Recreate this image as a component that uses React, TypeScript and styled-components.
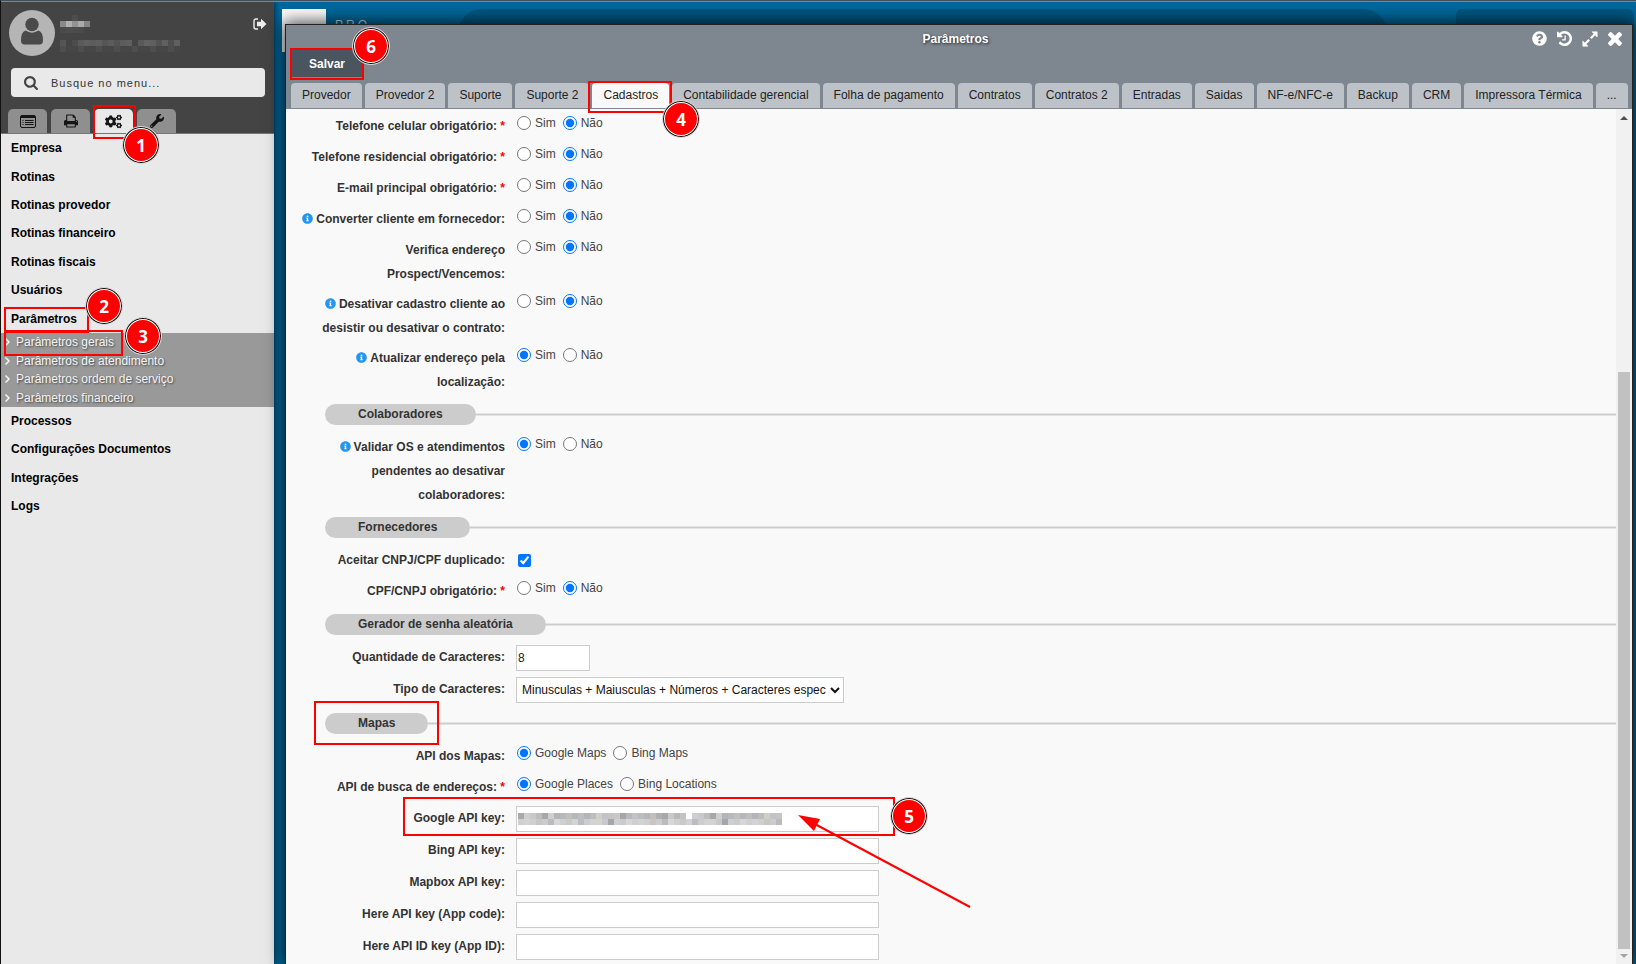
import React from 'react';
import styled, { createGlobalStyle } from 'styled-components';
import { FaCogs, FaInfoCircle, FaQuestionCircle, FaWrench } from 'react-icons/fa';

const GlobalStyle = createGlobalStyle`
  * { box-sizing: border-box; }
  body {
    margin: 0;
    overflow: hidden;
    font: 12px/24px "Liberation Sans", Arial, sans-serif;
    color: #333;
  }
  button, input, select { font: inherit; color: inherit; }
`;

const Page = styled.div`
  position: relative;
  display: flex;
  height: 100vh;
  overflow: hidden;
  background: #00689c;
  border-top: 1px solid #43505a;
  border-left: 1px solid #111;
`;

const TopLine = styled.div`
  position: absolute;
  inset: 0 0 auto 0;
  height: 1px;
  background: #7b858c;
  z-index: 3;
`;

/* ---------- Sidebar ---------- */

const Sidebar = styled.aside`
  display: flex;
  flex-direction: column;
  width: 273px;
  flex: none;
  background: #e9e9e9;
  box-shadow: 0 0 6px #001a2a;
  z-index: 1;
`;

const SideHeader = styled.div`
  display: flex;
  flex-direction: column;
  padding: 9px 7px 0;
  background: #444;
  border-bottom: 1px solid #777;
`;

const UserRow = styled.div`
  display: flex;
  align-items: flex-start;
  padding-left: 1px;
`;

const UserInfo = styled.div`
  flex: 1;
  display: flex;
  padding: 5px 0 0 5px;
`;

const LogoutButton = styled.button`
  display: flex;
  margin: 8px 0 0;
  padding: 0;
  border: 0;
  background: none;
  color: #eee;
`;

const SearchBox = styled.label`
  display: flex;
  align-items: center;
  gap: 13px;
  height: 29px;
  margin: 12px 2px 12px 3px;
  padding-left: 13px;
  border-radius: 4px;
  background: #e9e9e9;
  color: #444;
`;

const SearchInput = styled.input`
  flex: 1;
  min-width: 0;
  padding: 0;
  border: 0;
  outline: 0;
  background: none;
  font-size: 11px;
  letter-spacing: 1px;
  &::placeholder { color: #333; opacity: 1; }
`;

const SideTabs = styled.div`
  display: flex;
  gap: 4px;
`;

const SideTab = styled.button<{ $active?: boolean }>`
  display: flex;
  align-items: center;
  justify-content: center;
  width: 39px;
  height: 24px;
  padding: 0;
  border: 0;
  border-radius: 5px 5px 0 0;
  margin-bottom: ${(p) => (p.$active ? '-1px' : '0')};
  background: ${(p) => (p.$active ? '#e9e9e9' : '#8f8f8f')};
  color: #151515;
`;

const MenuGroup = styled.nav<{ $height: number }>`
  display: grid;
  grid-auto-rows: 1fr;
  align-items: center;
  height: ${(p) => p.$height}px;
  padding-left: 10px;
`;

const MenuLink = styled.a`
  color: #000;
  font-weight: bold;
  text-decoration: none;
`;

const SubMenu = styled.nav`
  display: grid;
  grid-auto-rows: 1fr;
  align-items: center;
  height: 74px;
  background: #999;
`;

const SubLink = styled.a`
  display: flex;
  align-items: center;
  gap: 5px;
  padding-left: 3px;
  line-height: 18px;
  color: #f4f4f4;
  text-decoration: none;
  text-shadow: 1px 1px 2px #444;
`;

/* ---------- Page behind the window ---------- */

const Backdrop = styled.div`
  display: flex;
  flex: 1;
  align-items: flex-start;
  padding: 8px 2px 0 8px;
`;

const Logo = styled.div`
  width: 44px;
  height: 43px;
  background: #fff;
`;

const LogoText = styled.div`
  width: 132px;
  padding: 4px 0 0 9px;
  letter-spacing: 3px;
  white-space: nowrap;
  color: #c3d8e4;
`;

const HeaderSearch = styled.div`
  flex: 1;
  height: 50px;
  margin-right: 69px;
  border-radius: 24px;
  background: #005782;
`;

const HeaderBox = styled.div`
  width: 178px;
  height: 44px;
  border-radius: 6px;
  background: #005782;
`;

/* ---------- Window ---------- */

const Window = styled.section`
  position: absolute;
  inset: 23px 3px 0 284px;
  display: flex;
  flex-direction: column;
  border: 1px solid #222;
  border-bottom: 0;
  background: #f9f9f9;
  box-shadow: 0 0 16px 2px rgba(0, 0, 0, 0.75);
  z-index: 2;
`;

const WindowHeader = styled.header`
  display: flex;
  flex-direction: column;
  padding: 0 4px 0 5px;
  background: #7e8790;
  border-bottom: 1px solid #7e8790;
`;

const TitleBar = styled.div`
  display: flex;
  align-items: center;
  height: 25px;
  padding: 2px 6px 0 0;
`;

const Title = styled.h1`
  flex: 1;
  margin: 0 0 0 88px;
  text-align: center;
  font-size: 12px;
  color: #fff;
  text-shadow: 1px 1px 3px #222;
`;

const WindowActions = styled.div`
  display: flex;
  align-items: center;
  gap: 10px;
`;

const IconButton = styled.button`
  display: flex;
  padding: 0;
  border: 0;
  background: none;
  color: #fff;
`;

const SaveButton = styled.button`
  align-self: flex-start;
  width: 72px;
  height: 27px;
  margin-bottom: 6px;
  padding: 0;
  border: 0;
  background: #4a5560;
  color: #fff;
  font-weight: bold;
`;

const Tabs = styled.div`
  display: flex;
  gap: 3px;
`;

const Tab = styled.button<{ $active?: boolean }>`
  height: 25px;
  padding: 0 11px;
  border: 0;
  border-radius: 4px 4px 0 0;
  line-height: 23px;
  white-space: nowrap;
  margin-bottom: ${(p) => (p.$active ? '-1px' : '0')};
  background: ${(p) => (p.$active ? '#f9f9f9' : '#bdc2c9')};
  color: #222;
`;

const WindowBody = styled.div`
  display: flex;
  flex: 1;
  min-height: 0;
`;

const Form = styled.form`
  flex: 1;
  padding-top: 2px;
  overflow: hidden;
`;

const Row = styled.div`
  display: grid;
  grid-template-columns: 206px 1fr;
  column-gap: 11px;
  align-items: start;
  min-height: 31px;
  padding-left: 13px;
`;

const RowLabel = styled.label`
  padding: 3px 0;
  text-align: right;
  font-weight: bold;
`;

const InfoIcon = styled(FaInfoCircle)`
  margin-right: 3px;
  vertical-align: -1px;
  color: #2196f3;
`;

const Required = styled.span`
  color: #f00;
`;

const Options = styled.div`
  display: flex;
  gap: 7px;
  padding-left: 1px;
`;

const Option = styled.label`
  display: flex;
  align-items: center;
  gap: 4px;
  color: #444;
`;

const Radio = styled.input`
  width: 14px;
  height: 14px;
  margin: 0;
`;

const Check = styled.input`
  width: 13px;
  height: 13px;
  margin: 9px 2px;
`;

const FieldBox = styled.div`
  position: relative;
  padding: 3px 0;
`;

const TextField = styled.input<{ $width: number }>`
  display: block;
  width: ${(p) => p.$width}px;
  height: 26px;
  padding: 0 1px;
  border: 1px solid #ccc;
  background: #fff;
  color: #222;
`;

const Select = styled.select`
  display: block;
  width: 328px;
  height: 26px;
  padding: 0 1px;
  border: 1px solid #ccc;
  border-radius: 0;
  background: #fff;
  color: #111;
`;

const SectionHead = styled.div`
  display: flex;
  align-items: center;
  padding: 7px 0 7px 39px;
`;

const SectionTitle = styled.h2`
  margin: 0;
  padding: 0 33px;
  border-radius: 11px;
  background: #ccc;
  font-size: 12px;
  line-height: 21px;
`;

const SectionLine = styled.div`
  flex: 1;
  height: 3px;
  border: solid #e4e4e4;
  border-width: 1px 0;
  background: #ccc;
`;

const ScrollTrack = styled.div`
  display: flex;
  flex-direction: column;
  align-items: center;
  width: 16px;
  padding: 7px 0 6px;
  background: #f1f1f1;
`;

const ScrollThumb = styled.div`
  width: 12px;
  height: 577px;
  margin: auto 0 5px;
  background: #c1c1c1;
`;

const ScrollArrow = styled.div<{ $down?: boolean }>`
  border: 4px solid transparent;
  ${(p) =>
    p.$down
      ? 'border-top-color: #a3a3a3; border-bottom-width: 0;'
      : 'border-bottom-color: #505050; border-top-width: 0;'}
`;

/* ---------- Annotations over the screen ---------- */

const Frame = styled.div<{ $x: number; $y: number; $w: number; $h: number }>`
  position: absolute;
  left: ${(p) => p.$x - 1}px;
  top: ${(p) => p.$y - 1}px;
  width: ${(p) => p.$w}px;
  height: ${(p) => p.$h}px;
  border: 2px solid #f00;
  pointer-events: none;
  z-index: 4;
`;

const Badge = styled.span<{ $x: number; $y: number }>`
  position: absolute;
  left: ${(p) => p.$x - 20}px;
  top: ${(p) => p.$y - 20}px;
  width: 38px;
  height: 38px;
  border: 1px solid #ddd;
  border-radius: 50%;
  background: #f00;
  box-shadow: inset 0 0 0 1px #000, inset 0 0 0 2px #fff;
  color: #fff;
  font: bold 17px/38px "Open Sans", "Noto Sans", sans-serif;
  text-align: center;
  z-index: 5;
`;

const Arrow = styled.svg`
  position: absolute;
  left: 796px;
  top: 812px;
  z-index: 5;
  pointer-events: none;
`;

const MosaicLayer = styled.svg`
  position: absolute;
  left: 2px;
  top: 10px;
`;

type IconProps = { size: number };

const AvatarIcon = () => (
  <svg width="46" height="46" viewBox="0 0 46 46">
    <circle cx="23" cy="23" r="23" fill="#b5b5b5" />
    <path d="M16.500 20.500Q12 22 12 30.500 12 34.500 15.500 34.500h15q3.500 0 3.500-4 0-8.500-4.500-10-6.500 4-13 0z" fill="#4a4a4a" />
    <circle cx="23" cy="15" r="7.500" fill="#b5b5b5" />
    <circle cx="23" cy="14.500" r="6.700" fill="#4a4a4a" />
  </svg>
);

const SearchIcon = ({ size }: IconProps) => (
  <svg width={size} height={size} viewBox="64 128 1664 1664" fill="currentColor">
    <path d="M1216 832q0-185-131.500-316.500T768 384 451.500 515.500 320 832t131.500 316.500T768 1280t316.500-131.500T1216 832zm512 832q0 52-38 90t-90 38q-54 0-90-38l-343-342q-179 124-399 124-143 0-273.500-55.500t-225-150-150-225T64 832t55.500-273.500 150-225 225-150T768 128t273.500 55.500 225 150 150 225T1472 832q0 220-124 399l343 343q37 37 37 90z" />
  </svg>
);

const PrintIcon = ({ size }: IconProps) => (
  <svg width={size} height={size} viewBox="0 64 1664 1664" fill="currentColor">
    <path d="M384 1536h896v-256H384v256zm0-640h896V512h-160q-40 0-68-28t-28-68V256H384v640zm1152 64q0-26-19-45t-45-19-45 19-19 45 19 45 45 19 45-19 19-45zm128 0v416q0 13-9.500 22.500t-22.500 9.500h-224v160q0 40-28 68t-68 28H352q-40 0-68-28t-28-68v-160H32q-13 0-22.500-9.500T0 1376V960q0-79 56.500-135.500T192 768h64V224q0-40 28-68t68-28h672q40 0 88 20t76 48l152 152q28 28 48 76t20 88v256h64q79 0 135.500 56.500T1664 960z" />
  </svg>
);

const HistoryIcon = ({ size }: IconProps) => (
  <svg width={size} height={size} viewBox="128 128 1536 1536" fill="currentColor">
    <path d="M1664 896q0 156-61 298t-164 245-245 164-298 61q-172 0-327-72.500T305 1387q-7-10-6.500-22.500t8.500-20.500l137-138q10-9 25-9 16 2 23 12 73 95 179 147t225 52q104 0 198.500-40.500T1258 1258t109.500-163.500T1408 896t-40.500-198.500T1258 534t-163.500-109.500T896 384q-98 0-188 35.500T548 521l137 138q31 30 14 69-17 40-59 40H192q-26 0-45-19t-19-45V256q0-42 40-59 39-17 69 14l130 129q107-101 244.500-156.500T896 128q156 0 298 61t245 164 164 245 61 298zm-640-288v448q0 14-9 23t-23 9H672q-14 0-23-9t-9-23v-64q0-14 9-23t23-9h224V608q0-14 9-23t23-9h64q14 0 23 9t9 23z" />
  </svg>
);

const CloseIcon = ({ size }: IconProps) => (
  <svg width={size} height={size} viewBox="302 366 1188 1188" fill="currentColor">
    <path d="M1490 1322q0 40-28 68l-136 136q-28 28-68 28t-68-28l-294-294-294 294q-28 28-68 28t-68-28l-136-136q-28-28-28-68t28-68l294-294-294-294q-28-28-28-68t28-68l136-136q28-28 68-28t68 28l294 294 294-294q28-28 68-28t68 28l136 136q28 28 28 68t-28 68l-294 294 294 294q28 28 28 68z" />
  </svg>
);

const ListIcon = () => (
  <svg width="16" height="13" viewBox="0 0 16 13" fill="none" stroke="currentColor">
    <rect x="0.500" y="0.500" width="15" height="12" rx="1.500" />
    <path d="M1 2h14" strokeWidth="2" />
    <path d="M2.500 5.500h1M5 5.500h8.500M2.500 7.500h1M5 7.500h8.500M2.500 9.500h1M5 9.500h8.500" />
  </svg>
);

const SignOutIcon = () => (
  <svg width="14" height="12" viewBox="0 0 14 12">
    <path d="M5 1H3Q1 1 1 3v6q0 2 2 2h2" fill="none" stroke="currentColor" strokeWidth="1.400" />
    <path d="M8 .8l5.500 5.200L8 11.200V8.200H4V3.800h4z" fill="currentColor" />
  </svg>
);

const ExpandIcon = () => (
  <svg width="16" height="16" viewBox="0 0 16 16" fill="currentColor" stroke="currentColor">
    <path d="M10 .8h5.200V6zM6 15.200H.8V10z" strokeWidth="0.600" strokeLinejoin="round" />
    <path d="M13 3L8.800 7.200M3 13l4.200-4.200" strokeWidth="2.200" />
  </svg>
);

const ChevronIcon = () => (
  <svg width="7" height="10" viewBox="0 0 7 10">
    <path d="M1.500 1.500L5 5l-3.500 3.500" fill="none" stroke="currentColor" strokeWidth="1.500" />
  </svg>
);

const nameShades: [number, number, string][] = [
  [12, 0, '#4d4d4d'],
  [0, 6, '#8a8a8a'], [6, 6, '#b0b0b0'], [12, 6, '#929292'], [18, 6, '#aaaaaa'], [24, 6, '#858585'],
  [0, 12, '#4a4a4a'], [6, 12, '#4d4d4d'], [12, 12, '#4c4c4c'], [18, 12, '#4a4a4a'],
];
const lineShades = ['#555', '#444', '#4d4d4d', '#5a5a5a', '#5f5f5f', '#5c5c5c', '#5f5f5f', '#555', '#5c5c5c', '#535353', '#5c5c5c', '#5f5f5f', '#444', '#5a5a5a', '#626262', '#606060', '#535353', '#606060', '#4f4f4f', '#606060'];

const UserMosaic = () => (
  <svg width="130" height="40" shapeRendering="crispEdges">
    {nameShades.map(([x, y, c]) => (
      <rect key={`${x}-${y}`} x={x} y={y} width="6" height="6" fill={c} />
    ))}
    {lineShades.map((c, i) => (
      <g key={i}>
        <rect x={i * 6} y="25" width="6" height="6" fill={c} />
        <rect x={i * 6} y="31" width="6" height="6" fill={i % 3 ? '#464646' : '#4e4e4e'} />
      </g>
    ))}
  </svg>
);

const keyTop = ['#a9a9ab', '#cfcfcf', '#c9c9c9', '#bdbdbd', '#a8a8aa', '#cfcfcf', '#b5b5b5', '#b4bac2', '#c3c0b8', '#b4b8bd', '#bebebe', '#b2b5bc', '#bdbdbd', '#cfcfc9', '#c0c4c9', '#c8c4c0', '#c8c8c8', '#a8a5a8', '#b9b9b9', '#c0c4c9', '#bdbdbd', '#b4b8bd', '#c3c0bc', '#b0b0b4', '#a8a8a4', '#c8c8c8', '#b9b9b9', '#c0c4c9'];
const keyBottom = ['#cfcfcf', '#d3d3d3', '#cfcfcf', '#c6c6c6', '#cccccc', '#b8bcc0', '#d9d6d3', '#cfcfcf', '#c9c9c9', '#d3d3d3', '#b8bcc3', '#cccccc', '#d3d3d3', '#d6d3cf', '#c8c8c8', '#a3a7ad', '#cfcfcf', '#c8ccd0', '#d6d6d6'];

const KeyMosaic = () => (
  <MosaicLayer width="268" height="12" shapeRendering="crispEdges">
    {Array.from({ length: 44 }, (_, i) => (
      <g key={i}>
        {i !== 28 && <rect x={i * 6} width="6" height="6" fill={keyTop[i % 28]} />}
        <rect x={i * 6} y="6" width="6" height="6" fill={keyBottom[i % 19]} />
      </g>
    ))}
  </MosaicLayer>
);

/* ---------- Form parts ---------- */

type LabelProps = { text: string; info?: boolean; required?: boolean };

const LabelText = ({ text, info, required }: LabelProps) => (
  <>
    {info && <InfoIcon size={11} />}
    {text}
    {required && <Required> *</Required>}
  </>
);

type RadioRowProps = LabelProps & { name: string; options?: string[]; value: string };

const RadioRow = ({ name, options = ['Sim', 'Não'], value, ...label }: RadioRowProps) => (
  <Row role="radiogroup" aria-labelledby={`${name}-label`}>
    <RowLabel as="span" id={`${name}-label`}>
      <LabelText {...label} />
    </RowLabel>
    <Options>
      {options.map((o) => (
        <Option key={o}>
          <Radio type="radio" name={name} defaultChecked={o === value} />
          {o}
        </Option>
      ))}
    </Options>
  </Row>
);

type TextRowProps = { id: string; text: string; width?: number; value?: string; masked?: boolean };

const TextRow = ({ id, text, width = 363, value = '', masked }: TextRowProps) => (
  <Row>
    <RowLabel htmlFor={id}>{text}</RowLabel>
    <FieldBox>
      <TextField id={id} $width={width} defaultValue={value} />
      {masked && <KeyMosaic />}
    </FieldBox>
  </Row>
);

const Section = ({ title }: { title: string }) => (
  <SectionHead>
    <SectionTitle>{title}</SectionTitle>
    <SectionLine />
  </SectionHead>
);

const tabs = ['Provedor', 'Provedor 2', 'Suporte', 'Suporte 2', 'Cadastros', 'Contabilidade gerencial', 'Folha de pagamento', 'Contratos', 'Contratos 2', 'Entradas', 'Saidas', 'NF-e/NFC-e', 'Backup', 'CRM', 'Impressora Térmica', '...'];
const menuTop = ['Empresa', 'Rotinas', 'Rotinas provedor', 'Rotinas financeiro', 'Rotinas fiscais', 'Usuários', 'Parâmetros'];
const subMenu = ['Parâmetros gerais', 'Parâmetros de atendimento', 'Parâmetros ordem de serviço', 'Parâmetros financeiro'];
const menuBottom = ['Processos', 'Configurações Documentos', 'Integrações', 'Logs'];

export default function App() {
  return (
    <>
      <GlobalStyle />
      <Page>
        <TopLine />
        <Sidebar>
          <SideHeader>
            <UserRow>
              <AvatarIcon />
              <UserInfo><UserMosaic /></UserInfo>
              <LogoutButton aria-label="Sair"><SignOutIcon /></LogoutButton>
            </UserRow>
            <SearchBox>
              <SearchIcon size={14} />
              <SearchInput placeholder="Busque no menu..." aria-label="Busque no menu" />
            </SearchBox>
            <SideTabs>
              <SideTab aria-label="Cadastros"><ListIcon /></SideTab>
              <SideTab aria-label="Relatórios"><PrintIcon size={14} /></SideTab>
              <SideTab aria-label="Configurações" $active><FaCogs size={17} /></SideTab>
              <SideTab aria-label="Ferramentas"><FaWrench size={14} /></SideTab>
            </SideTabs>
          </SideHeader>
          <MenuGroup $height={199}>
            {menuTop.map((m) => <MenuLink key={m} href="#">{m}</MenuLink>)}
          </MenuGroup>
          <SubMenu>
            {subMenu.map((m) => (
              <SubLink key={m} href="#"><ChevronIcon />{m}</SubLink>
            ))}
          </SubMenu>
          <MenuGroup $height={113}>
            {menuBottom.map((m) => <MenuLink key={m} href="#">{m}</MenuLink>)}
          </MenuGroup>
        </Sidebar>

        <Backdrop>
          <Logo />
          <LogoText>PRO —</LogoText>
          <HeaderSearch />
          <HeaderBox />
        </Backdrop>

        <Window>
          <WindowHeader>
            <TitleBar>
              <Title>Parâmetros</Title>
              <WindowActions>
                <IconButton aria-label="Ajuda"><FaQuestionCircle size={15} /></IconButton>
                <IconButton aria-label="Histórico"><HistoryIcon size={15} /></IconButton>
                <IconButton aria-label="Expandir"><ExpandIcon /></IconButton>
                <IconButton aria-label="Fechar"><CloseIcon size={14} /></IconButton>
              </WindowActions>
            </TitleBar>
            <SaveButton type="button">Salvar</SaveButton>
            <Tabs role="tablist">
              {tabs.map((t) => (
                <Tab key={t} role="tab" type="button" $active={t === 'Cadastros'}>{t}</Tab>
              ))}
            </Tabs>
          </WindowHeader>
          <WindowBody>
            <Form>
              <RadioRow name="celular" text="Telefone celular obrigatório:" required value="Não" />
              <RadioRow name="residencial" text="Telefone residencial obrigatório:" required value="Não" />
              <RadioRow name="email" text="E-mail principal obrigatório:" required value="Não" />
              <RadioRow name="converter" text="Converter cliente em fornecedor:" info value="Não" />
              <RadioRow name="verifica" text="Verifica endereço Prospect/Vencemos:" value="Não" />
              <RadioRow name="desativar" text="Desativar cadastro cliente ao desistir ou desativar o contrato:" info value="Não" />
              <RadioRow name="atualizar" text="Atualizar endereço pela localização:" info value="Sim" />
              <Section title="Colaboradores" />
              <RadioRow name="validar" text="Validar OS e atendimentos pendentes ao desativar colaboradores:" info value="Sim" />
              <Section title="Fornecedores" />
              <Row>
                <RowLabel htmlFor="duplicado">Aceitar CNPJ/CPF duplicado:</RowLabel>
                <Check id="duplicado" type="checkbox" defaultChecked />
              </Row>
              <RadioRow name="cpf" text="CPF/CNPJ obrigatório:" required value="Não" />
              <Section title="Gerador de senha aleatória" />
              <TextRow id="quantidade" text="Quantidade de Caracteres:" width={74} value="8" />
              <Row>
                <RowLabel htmlFor="tipo">Tipo de Caracteres:</RowLabel>
                <FieldBox>
                  <Select id="tipo">
                    <option>Minusculas + Maiusculas + Números + Caracteres especiais</option>
                  </Select>
                </FieldBox>
              </Row>
              <Section title="Mapas" />
              <RadioRow name="mapas" text="API dos Mapas:" options={['Google Maps', 'Bing Maps']} value="Google Maps" />
              <RadioRow name="busca" text="API de busca de endereços:" required options={['Google Places', 'Bing Locations']} value="Google Places" />
              <TextRow id="google" text="Google API key:" masked />
              <TextRow id="bing" text="Bing API key:" />
              <TextRow id="mapbox" text="Mapbox API key:" />
              <TextRow id="here" text="Here API key (App code):" />
              <TextRow id="hereid" text="Here API ID key (App ID):" />
            </Form>
            <ScrollTrack>
              <ScrollArrow />
              <ScrollThumb />
              <ScrollArrow $down />
            </ScrollTrack>
          </WindowBody>
        </Window>

        <Frame $x={93} $y={105} $w={43} $h={34} />
        <Frame $x={4} $y={307} $w={85} $h={26} />
        <Frame $x={4} $y={330} $w={119} $h={26} />
        <Frame $x={588} $y={81} $w={84} $h={32} />
        <Frame $x={290} $y={48} $w={74} $h={32} />
        <Frame $x={314} $y={701} $w={125} $h={44} />
        <Frame $x={403} $y={797} $w={492} $h={39} />
        <Badge $x={141} $y={145}>1</Badge>
        <Badge $x={104} $y={306}>2</Badge>
        <Badge $x={143} $y={336}>3</Badge>
        <Badge $x={681} $y={119}>4</Badge>
        <Badge $x={909} $y={816}>5</Badge>
        <Badge $x={371} $y={46}>6</Badge>
        <Arrow width="178" height="98" viewBox="0 0 178 98">
          <path d="M16 10L173 94" stroke="#f00" strokeWidth="2" />
          <path d="M1 2L23 6L17 18z" fill="#f00" />
        </Arrow>
      </Page>
    </>
  );
}
